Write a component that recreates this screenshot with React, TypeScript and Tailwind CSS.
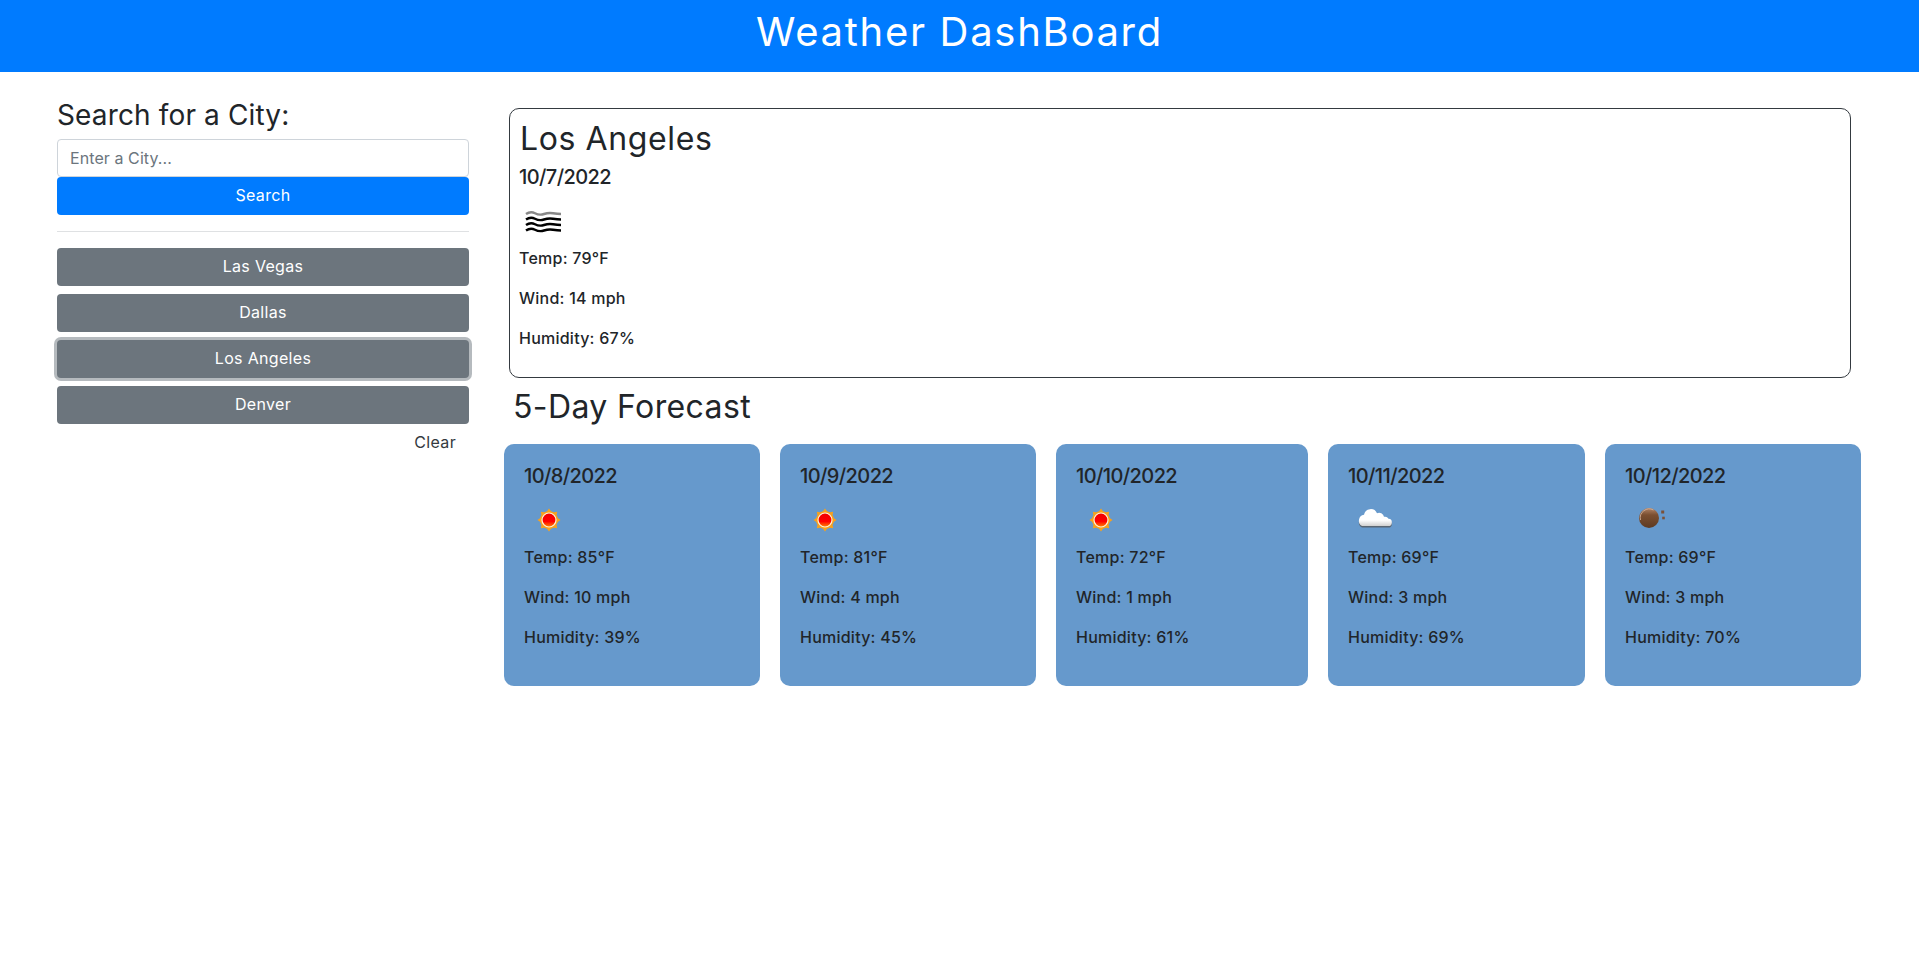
import React from "react";

const font = "[font-family:'Inter','Liberation_Sans',sans-serif]";

function Wind() {
  const d = (y: number) => `M6 ${y} q4.5 -3.2 9 -0.8 t9 0.8 t9 -0.8 t8 0.8`;
  return (
    <svg width="50" height="50" viewBox="0 0 50 50" className="block">
      <g fill="none" stroke="#000" strokeWidth="2.4">
        <path d={d(22)} stroke="#888" />
        <path d={d(27.5)} />
        <path d={d(33)} />
        <path d={d(38.5)} />
      </g>
    </svg>
  );
}

function Sun() {
  const rays = Array.from({ length: 8 }, (_, i) => i * 45);
  return (
    <svg width="50" height="50" viewBox="0 0 50 50" className="block">
      <defs>
        <linearGradient id="sunfill" x1="0" y1="0" x2="0" y2="1">
          <stop offset="0" stopColor="#f00000" />
          <stop offset="0.6" stopColor="#ff0000" />
          <stop offset="1" stopColor="#ff8a00" />
        </linearGradient>
      </defs>
      {rays.map((r) => (
        <polygon key={r} points="22.5,17 25,13.5 27.5,17" fill="#f9a11b" transform={`rotate(${r} 25 25)`} />
      ))}
      <circle cx="25" cy="25" r="9" fill="#f9a11b" />
      <circle cx="25" cy="25" r="7" fill="url(#sunfill)" stroke="#fff2d8" strokeWidth="1.2" />
    </svg>
  );
}

const cloudPath = "M14 31 h26 a3.6 3.6 0 0 0 .5 -7.2 a4 4 0 0 0 -4.5 -2 a5 5 0 0 0 -7 -3.5 a6.8 6.8 0 0 0 -13 1.5 a6 6 0 0 0 -2 11.2 z";

function Cloud() {
  return (
    <svg width="50" height="50" viewBox="0 0 50 50" className="block">
      <defs>
        <linearGradient id="cloudfill" x1="0" y1="0" x2="0" y2="1">
          <stop offset="0" stopColor="#ffffff" />
          <stop offset="0.65" stopColor="#ffffff" />
          <stop offset="1" stopColor="#d0d0d0" />
        </linearGradient>
      </defs>
      <path d={cloudPath} fill="#555" opacity="0.75" transform="translate(0 1.6)" />
      <path d={cloudPath} fill="url(#cloudfill)" />
    </svg>
  );
}

function Rock() {
  return (
    <svg width="50" height="50" viewBox="0 0 50 50" className="block">
      <defs>
        <linearGradient id="rockfill" x1="0" y1="0" x2="0" y2="1">
          <stop offset="0" stopColor="#b08468" />
          <stop offset="0.35" stopColor="#7b4f30" />
          <stop offset="1" stopColor="#5d3a22" />
        </linearGradient>
      </defs>
      <circle cx="24" cy="23" r="10" fill="url(#rockfill)" />
      <path d="M15.5 25 a9 9 0 0 1 13 -10" fill="none" stroke="#d8b7a0" strokeWidth="1" opacity="0.8" />
      <rect x="36.2" y="15.5" width="3" height="3" fill="#7b5138" />
      <rect x="37.2" y="21.7" width="2.6" height="2.6" fill="#7b5138" />
    </svg>
  );
}

const days = [
  { d: "10/8/2022", I: Sun, t: 85, w: 10, h: 39, cls: "w-[256px]" },
  { d: "10/9/2022", I: Sun, t: 81, w: 4, h: 45, cls: "w-[256px]" },
  { d: "10/10/2022", I: Sun, t: 72, w: 1, h: 61, cls: "w-[252px]" },
  { d: "10/11/2022", I: Cloud, t: 69, w: 3, h: 69, cls: "w-[257px]" },
  { d: "10/12/2022", I: Rock, t: 69, w: 3, h: 70, cls: "w-[256px]" },
];

const btn = "block w-full h-[38px] rounded-[4px] text-white text-center text-[16px] tracking-[0.02em] leading-[36px] pb-[2px]";
const para = "text-[16px] leading-[24px] mb-[16px] tracking-[0.015em] font-medium";
const dateCls = "text-[20px] leading-[24px] tracking-[-0.03em] font-medium";

export default function App() {
  return (
    <div className={`${font} min-h-[969px] bg-white text-[#212529]`}>
      <header className="h-[72px] bg-[#007bff] text-white text-center text-[40px] leading-[64px] tracking-[0.0425em]">
        Weather DashBoard
      </header>
      <div className="flex items-start pl-[57px]">
        <aside className="w-[412px] shrink-0 pt-[26px]">
          <h3 className="text-[28px] leading-[34px] mb-[7px] tracking-[0.005em]">Search for a City:</h3>
          <input
            placeholder="Enter a City..."
            className="block w-full h-[38px] px-[12px] border border-[#ced4da] rounded-[4px] text-[16px] tracking-[0.005em] outline-none placeholder:text-[#6c757d] placeholder:opacity-100"
          />
          <button className={`${btn} bg-[#007bff]`}>Search</button>
          <hr className="mt-[16px] mb-[16px] border-0 border-t border-[#dfe1e3]" />
          <div className="flex flex-col gap-[8px]">
            <button className={`${btn} bg-[#6c757d]`}>Las Vegas</button>
            <button className={`${btn} bg-[#6c757d]`}>Dallas</button>
            <button className={`${btn} bg-[#6c757d] shadow-[0_0_0_3px_rgba(108,117,125,0.5)]`}>Los Angeles</button>
            <button className={`${btn} bg-[#6c757d]`}>Denver</button>
          </div>
          <div className="flex justify-end pr-[13px] pt-[6px] text-[16px] tracking-[0.02em] leading-[24px] text-[#343a40]">Clear</div>
        </aside>
        <main className="ml-[35px] flex-1 pt-[36px]">
          <section className="ml-[5px] w-[1342px] h-[270px] border border-[#343a40] rounded-[10px] px-[10px] pt-[11px] pb-[10px]">
            <h2 className="text-[32px] leading-[38px] mb-[7px] tracking-[0.019em]">Los Angeles</h2>
            <h5 className={`${dateCls} -ml-px`}>10/7/2022</h5>
            <div className="h-[57px] pt-[3px]"><Wind /></div>
            <p className={`${para} -ml-px`}>Temp: 79°F</p>
            <p className={`${para} -ml-px`}>Wind: 14 mph</p>
            <p className={`${para} -ml-px`}>Humidity: 67%</p>
          </section>
          <h2 className="ml-[9px] mt-[10px] mb-[18px] text-[32px] leading-[38px] tracking-[0.012em]">5-Day Forecast</h2>
          <div className="flex gap-[20px]">
            {days.map(({ d, I, t, w, h, cls }) => (
              <article key={d} className={`${cls} shrink-0 h-[242px] rounded-[10px] bg-[#6699cc] p-[20px]`}>
                <h5 className={dateCls}>{d}</h5>
                <div className="h-[57px] pt-[7px]"><I /></div>
                <p className={para}>Temp: {t}°F</p>
                <p className={para}>Wind: {w} mph</p>
                <p className={para}>Humidity: {h}%</p>
              </article>
            ))}
          </div>
        </main>
      </div>
    </div>
  );
}
